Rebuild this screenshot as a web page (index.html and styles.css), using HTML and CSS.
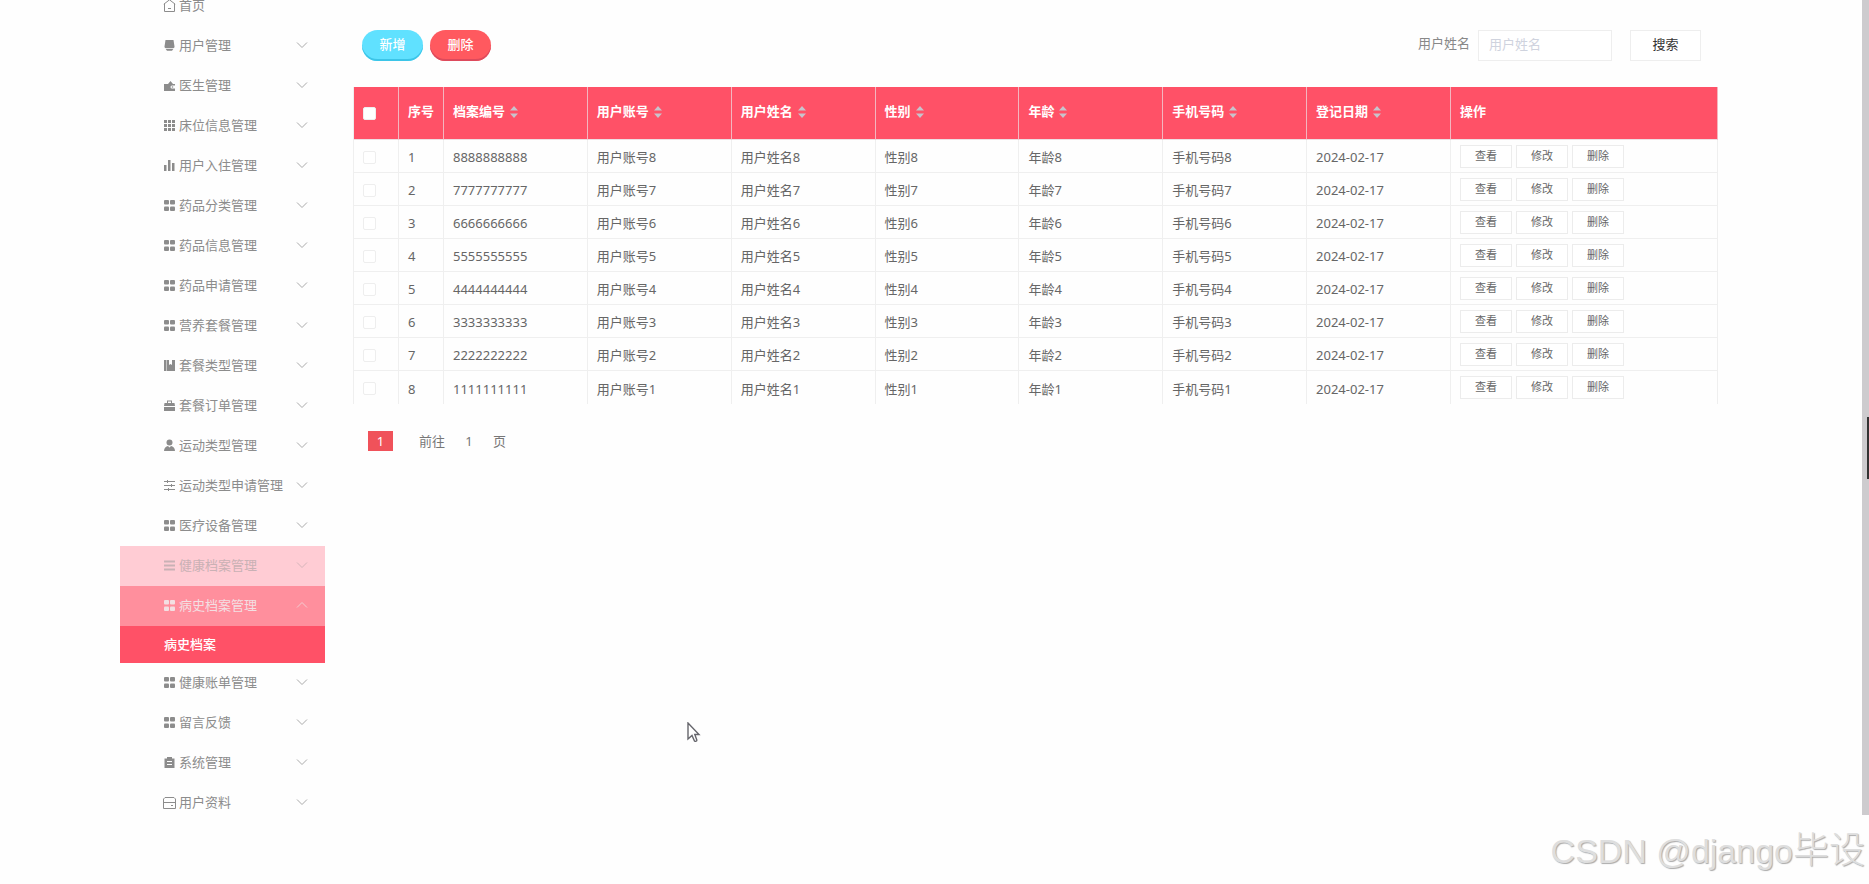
FILE: index.html
```html
<!DOCTYPE html>
<html lang="zh-CN">
<head>
	<meta charset="UTF-8">
	<title>病史档案</title>
	<link rel="stylesheet" href="styles.css">
</head>
<body>
	<!-- 图标 -->
	<svg class="sprite">
		<symbol id="i-home" viewBox="0 0 13 13"><path d="M.8 5.2 6.5.8l5.7 4.4M1.500 4.800v7.700h10V4.800M5 9.500h3" fill="none" stroke="currentColor"/></symbol>
		<symbol id="i-user" viewBox="0 0 13 13"><path d="M2.5 1h8l1 6.500c0 1-.5 1.500-1.500 1.500H3c-1 0-1.500-.5-1.500-1.500zM2.500 9.800h8l-1.500 1.900H4z"/></symbol>
		<symbol id="i-wallet" viewBox="0 0 13 13"><path d="M1 5h4l2.500-3L10 5h2v1.500H9a1.500 1.500 0 0 0 0 3h3V12H1z"/><circle cx="9.500" cy="8" r=".8"/></symbol>
		<symbol id="i-nine" viewBox="0 0 13 13"><path d="M1 1h3v3H1zM5 1h3v3H5zM9 1h3v3H9zM1 5h3v3H1zM5 5h3v3H5zM9 5h3v3H9zM1 9h3v3H1zM5 9h3v3H5zM9 9h3v3H9z"/></symbol>
		<symbol id="i-bars" viewBox="0 0 13 13"><path d="M1 6h2.500v6H1zM5 1h2.500v11H5zM9 4h2.500v8H9z"/></symbol>
		<symbol id="i-grid" viewBox="0 0 13 13"><rect x="1" y="1" width="5" height="4.500" rx="1"/><rect x="7" y="1" width="5" height="4.500" rx="1"/><rect x="1" y="7.500" width="5" height="4.500" rx="1"/><rect x="7" y="7.500" width="5" height="4.500" rx="1"/></symbol>
		<symbol id="i-book" viewBox="0 0 13 13"><path d="M1 1h2v11H1zM3.500 1H6v5l1.500-1L9 6V1h3v11H3.500z"/></symbol>
		<symbol id="i-bag" viewBox="0 0 13 13"><path d="M4 4V1.500h5V4h2.500l.5 3H1l.5-3zM5 4h3V2.500H5zM1 8h11v4H1z"/></symbol>
		<symbol id="i-person" viewBox="0 0 13 13"><circle cx="6.500" cy="3.500" r="3"/><path d="M1 12c0-3 2-4.500 4-5l1.500 1.500L8 7c2 .5 4 2 4 5z"/></symbol>
		<symbol id="i-slide" viewBox="0 0 13 13"><path d="M1 2.500h11M1 6.500h11M1 10.500h11M4.500 1v3M8.500 5v3M5.500 9v3" fill="none" stroke="currentColor"/></symbol>
		<symbol id="i-list" viewBox="0 0 13 13"><path d="M1 2.500h11M1 6.500h11M1 10.500h11" fill="none" stroke="currentColor" stroke-width="2"/></symbol>
		<symbol id="i-board" viewBox="0 0 13 13"><path d="M1.500 2.500H4V1h5v1.500h2.500V12h-10zM4 5v1h5V5zM4 8v1h5V8z" fill-rule="evenodd"/></symbol>
		<symbol id="i-card" viewBox="0 0 13 13"><path d="M2 1.500h9L12.500 3v9.500H.5V3zM.5 6.500h12M8 9.500h2" fill="none" stroke="currentColor"/></symbol>
		<symbol id="i-down" viewBox="0 0 12 12"><path d="m1 3.500 5 5 5-5" fill="none" stroke="currentColor"/></symbol>
		<symbol id="i-up" viewBox="0 0 12 12"><path d="m1 8.500 5-5 5 5" fill="none" stroke="currentColor"/></symbol>
		<symbol id="i-sort" viewBox="0 0 8 14"><path d="M0 5.500 4 1l4 4.500zM0 8.500h8L4 13z"/></symbol>
	</svg>

	<div class="layout">
		<nav class="sidebar">
			<ul>
				<li><a href="#"><svg class="ico"><use href="#i-home"/></svg>首页</a></li>
				<li><a href="#"><svg class="ico"><use href="#i-user"/></svg>用户管理<svg class="arrow"><use href="#i-down"/></svg></a></li>
				<li><a href="#"><svg class="ico"><use href="#i-wallet"/></svg>医生管理<svg class="arrow"><use href="#i-down"/></svg></a></li>
				<li><a href="#"><svg class="ico"><use href="#i-nine"/></svg>床位信息管理<svg class="arrow"><use href="#i-down"/></svg></a></li>
				<li><a href="#"><svg class="ico"><use href="#i-bars"/></svg>用户入住管理<svg class="arrow"><use href="#i-down"/></svg></a></li>
				<li><a href="#"><svg class="ico"><use href="#i-grid"/></svg>药品分类管理<svg class="arrow"><use href="#i-down"/></svg></a></li>
				<li><a href="#"><svg class="ico"><use href="#i-grid"/></svg>药品信息管理<svg class="arrow"><use href="#i-down"/></svg></a></li>
				<li><a href="#"><svg class="ico"><use href="#i-grid"/></svg>药品申请管理<svg class="arrow"><use href="#i-down"/></svg></a></li>
				<li><a href="#"><svg class="ico"><use href="#i-grid"/></svg>营养套餐管理<svg class="arrow"><use href="#i-down"/></svg></a></li>
				<li><a href="#"><svg class="ico"><use href="#i-book"/></svg>套餐类型管理<svg class="arrow"><use href="#i-down"/></svg></a></li>
				<li><a href="#"><svg class="ico"><use href="#i-bag"/></svg>套餐订单管理<svg class="arrow"><use href="#i-down"/></svg></a></li>
				<li><a href="#"><svg class="ico"><use href="#i-person"/></svg>运动类型管理<svg class="arrow"><use href="#i-down"/></svg></a></li>
				<li><a href="#"><svg class="ico"><use href="#i-slide"/></svg>运动类型申请管理<svg class="arrow"><use href="#i-down"/></svg></a></li>
				<li><a href="#"><svg class="ico"><use href="#i-grid"/></svg>医疗设备管理<svg class="arrow"><use href="#i-down"/></svg></a></li>
				<li class="fading"><a href="#"><svg class="ico"><use href="#i-list"/></svg>健康档案管理<svg class="arrow"><use href="#i-down"/></svg></a></li>
				<li class="opened">
					<a href="#"><svg class="ico"><use href="#i-grid"/></svg>病史档案管理<svg class="arrow"><use href="#i-up"/></svg></a>
					<ul class="submenu">
						<li><a href="#">病史档案</a></li>
					</ul>
				</li>
				<li><a href="#"><svg class="ico"><use href="#i-grid"/></svg>健康账单管理<svg class="arrow"><use href="#i-down"/></svg></a></li>
				<li><a href="#"><svg class="ico"><use href="#i-grid"/></svg>留言反馈<svg class="arrow"><use href="#i-down"/></svg></a></li>
				<li><a href="#"><svg class="ico"><use href="#i-board"/></svg>系统管理<svg class="arrow"><use href="#i-down"/></svg></a></li>
				<li><a href="#"><svg class="ico"><use href="#i-card"/></svg>用户资料<svg class="arrow"><use href="#i-down"/></svg></a></li>
			</ul>
		</nav>

		<main class="main">
			<form class="toolbar">
				<button type="button" class="btn-add">新增</button>
				<button type="button" class="btn-del">删除</button>
				<label for="name">用户姓名</label>
				<input type="text" id="name" placeholder="用户姓名">
				<button type="button" class="btn-search">搜索</button>
			</form>

			<table class="list">
				<colgroup>
					<col class="c-check"><col class="c-no"><col><col><col><col><col><col><col><col class="c-op">
				</colgroup>
				<thead>
					<tr>
						<th><input type="checkbox" aria-label="全选"></th>
						<th>序号</th>
						<th>档案编号<svg class="sort"><use href="#i-sort"/></svg></th>
						<th>用户账号<svg class="sort"><use href="#i-sort"/></svg></th>
						<th>用户姓名<svg class="sort"><use href="#i-sort"/></svg></th>
						<th>性别<svg class="sort"><use href="#i-sort"/></svg></th>
						<th>年龄<svg class="sort"><use href="#i-sort"/></svg></th>
						<th>手机号码<svg class="sort"><use href="#i-sort"/></svg></th>
						<th>登记日期<svg class="sort"><use href="#i-sort"/></svg></th>
						<th>操作</th>
					</tr>
				</thead>
				<tbody>
					<tr><td><input type="checkbox" aria-label="选择1"></td><td>1</td><td>8888888888</td><td>用户账号8</td><td>用户姓名8</td><td>性别8</td><td>年龄8</td><td>手机号码8</td><td>2024-02-17</td><td><div class="ops"><button>查看</button><button>修改</button><button>删除</button></div></td></tr>
					<tr><td><input type="checkbox" aria-label="选择2"></td><td>2</td><td>7777777777</td><td>用户账号7</td><td>用户姓名7</td><td>性别7</td><td>年龄7</td><td>手机号码7</td><td>2024-02-17</td><td><div class="ops"><button>查看</button><button>修改</button><button>删除</button></div></td></tr>
					<tr><td><input type="checkbox" aria-label="选择3"></td><td>3</td><td>6666666666</td><td>用户账号6</td><td>用户姓名6</td><td>性别6</td><td>年龄6</td><td>手机号码6</td><td>2024-02-17</td><td><div class="ops"><button>查看</button><button>修改</button><button>删除</button></div></td></tr>
					<tr><td><input type="checkbox" aria-label="选择4"></td><td>4</td><td>5555555555</td><td>用户账号5</td><td>用户姓名5</td><td>性别5</td><td>年龄5</td><td>手机号码5</td><td>2024-02-17</td><td><div class="ops"><button>查看</button><button>修改</button><button>删除</button></div></td></tr>
					<tr><td><input type="checkbox" aria-label="选择5"></td><td>5</td><td>4444444444</td><td>用户账号4</td><td>用户姓名4</td><td>性别4</td><td>年龄4</td><td>手机号码4</td><td>2024-02-17</td><td><div class="ops"><button>查看</button><button>修改</button><button>删除</button></div></td></tr>
					<tr><td><input type="checkbox" aria-label="选择6"></td><td>6</td><td>3333333333</td><td>用户账号3</td><td>用户姓名3</td><td>性别3</td><td>年龄3</td><td>手机号码3</td><td>2024-02-17</td><td><div class="ops"><button>查看</button><button>修改</button><button>删除</button></div></td></tr>
					<tr><td><input type="checkbox" aria-label="选择7"></td><td>7</td><td>2222222222</td><td>用户账号2</td><td>用户姓名2</td><td>性别2</td><td>年龄2</td><td>手机号码2</td><td>2024-02-17</td><td><div class="ops"><button>查看</button><button>修改</button><button>删除</button></div></td></tr>
					<tr><td><input type="checkbox" aria-label="选择8"></td><td>8</td><td>1111111111</td><td>用户账号1</td><td>用户姓名1</td><td>性别1</td><td>年龄1</td><td>手机号码1</td><td>2024-02-17</td><td><div class="ops"><button>查看</button><button>修改</button><button>删除</button></div></td></tr>
				</tbody>
			</table>

			<div class="page">
				<button class="active">1</button>
				<label for="jump">前往</label>
				<input type="text" id="jump" value="1">
				<span>页</span>
			</div>
		</main>
	</div>

	<div class="scroll"></div>
	<div class="thumb"></div>
	<svg class="cursor" viewBox="0 0 14 21"><path d="M1 1v16l4-3.500 2.500 5.500c1 .8 2.500 0 2.300-1L7.800 12.500H12z" fill="#fff" stroke="#66666c" stroke-width="1.400"/></svg>
	<div class="mark">CSDN @django<span>毕设</span></div>
</body>
</html>
```
FILE: styles.css
```css
*{box-sizing:border-box;}
body{margin:0;height:100vh;overflow:hidden;background:#fefefe;color:#666;font:13px/20px "Noto Sans","Noto Sans CJK SC",sans-serif;}
ul{list-style:none;margin:0;padding:0;}
a{color:inherit;text-decoration:none;}
button,input{margin:0;padding:0;font:inherit;color:inherit;border-radius:0;}
svg{fill:currentColor;}
.sprite{display:none;}

.layout{display:flex;padding:0 151px 0 120px;}

/* 左侧菜单，已向上滚动 */
.sidebar{flex:none;width:205px;margin-top:-14px;color:#8c8c8c;}
.sidebar a{display:flex;align-items:center;height:40px;padding:0 17px 2px 43px;}
.sidebar .ico{width:13px;height:13px;margin-right:3px;}
.sidebar .arrow{width:12px;height:12px;margin-left:auto;color:#aaa;}
.sidebar .fading{background:#ffccd4;color:#c9b1b5;}
.sidebar .fading .arrow{color:#d5b5ba;}
.sidebar .opened{background:#ff8f9d;color:#f3dfe2;}
.sidebar .opened .arrow{color:#f3ccd1;}
.sidebar .submenu a{height:37px;padding-left:44px;background:#ff5167;color:#fff;font-weight:500;}

.main{flex:1;min-width:0;margin-left:28px;}

.toolbar{display:flex;align-items:center;height:87px;padding:3px 17px 0 9px;}
.toolbar button{height:31px;padding-bottom:3px;}
.btn-add,.btn-del{width:61px;margin-right:7px;border:0;border-radius:16px;color:#fff;font-weight:500;}
.btn-add{background:#60e1ff;box-shadow:inset 0 -2px 0 #3cc5e8;}
.btn-del{background:#ff595f;box-shadow:inset 0 -2px 0 #dd4a5c;}
.toolbar label{margin-left:auto;padding-bottom:5px;color:#888;}
.toolbar input{width:134px;height:31px;margin:0 18px 0 8px;padding:0 10px 3px;border:1px solid #eee;background:#fff;}
.toolbar input::placeholder{color:#cfd3de;opacity:1;}
.toolbar .btn-search{width:71px;border:1px solid #eee;background:#fff;color:#333;}

.list{width:100%;table-layout:fixed;border-collapse:separate;border-spacing:0;border-left:1px solid #efefef;}
.list .c-check,.list .c-no{width:45px;}
.list .c-op{width:267px;}
.list th,.list td{padding:0 0 0 9px;border-right:1px solid #efefef;text-align:left;white-space:nowrap;}
.list th{height:53px;padding-bottom:4px;border-right-color:#f3b6bf;border-bottom:1px solid #eddfe2;background:#ff5167;color:#fff;font-weight:700;}
.list th:first-child{padding-bottom:0;}
.list td{height:33px;padding-top:2px;border-bottom:1px solid #efefef;}
.list td:last-child{padding-top:0;}
.list tr:last-child td{border-bottom:0;}
.list input{display:block;appearance:none;width:13px;height:13px;border:1px solid #eee;border-radius:2px;background:#fff;}
.list .sort{width:8px;height:14px;margin-left:5px;vertical-align:middle;color:#c8c3cc;}
.ops{display:flex;gap:4px;}
.ops button{width:52px;height:23px;padding-bottom:1px;border:1px solid #ececec;background:#fff;font-size:11px;line-height:16px;}

.page{display:flex;align-items:center;margin-top:27px;padding-left:15px;color:#777;}
.page .active{width:25px;height:20px;border:0;background:#f0525a;color:#fff;}
.page label{margin-left:26px;}
.page input{width:48px;height:20px;border:0;background:none;text-align:center;}

.scroll{position:absolute;right:0;top:0;width:7px;height:815px;background:#cdcbce;}
.thumb{position:absolute;right:0;top:417px;width:2px;height:62px;background:#333;}
.cursor{position:absolute;left:687px;top:722px;width:14px;height:21px;}
.mark{position:absolute;right:4px;bottom:11px;color:#dedede;font:300 34px/44px "Liberation Sans","Noto Sans CJK SC",sans-serif;text-shadow:1px 1px 1px #aaa;}
.mark span{font-size:36px;}
```
